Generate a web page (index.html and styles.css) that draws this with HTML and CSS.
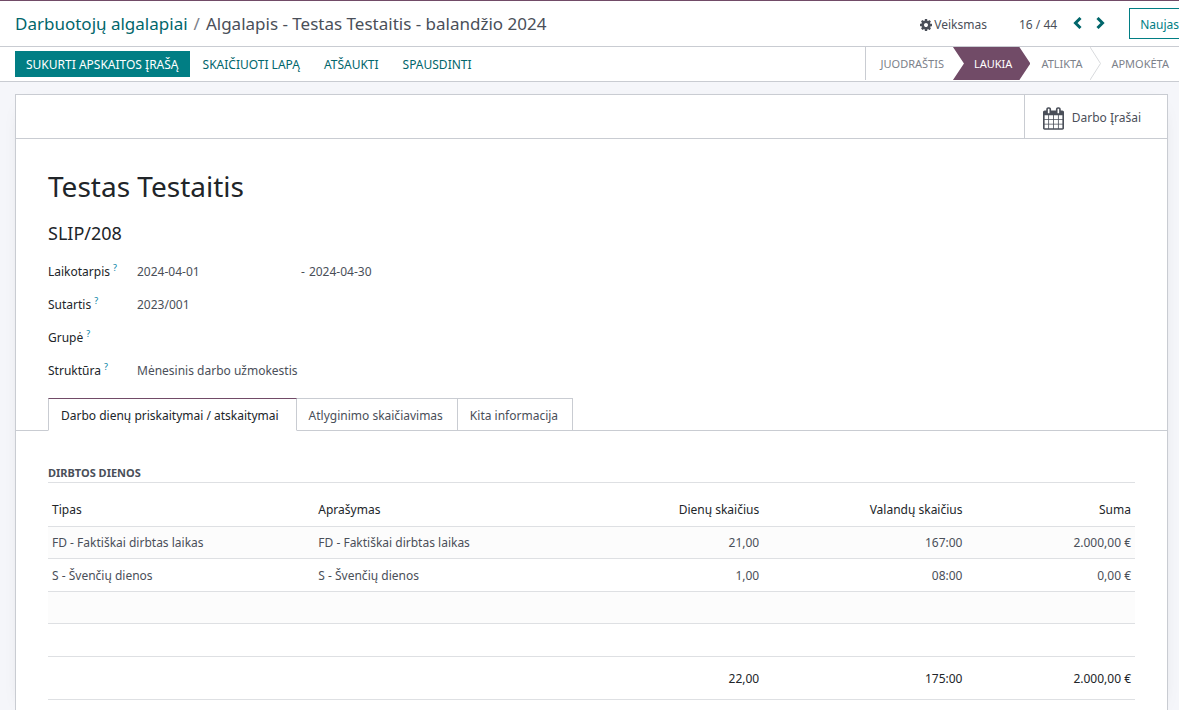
FILE: index.html
```html
<!DOCTYPE html>
<html lang="lt">
<head>
<meta charset="utf-8">
<meta name="viewport" content="width=device-width, initial-scale=1">
<title>Algalapis - Testas Testaitis - balandžio 2024</title>
<link rel="stylesheet" href="styles.css">
</head>
<body>
<header class="control-panel">
  <nav class="breadcrumb" aria-label="Kelias">
    <a href="#">Darbuotojų algalapiai</a>
    <span class="separator">/</span>
    <span>Algalapis - Testas Testaitis - balandžio 2024</span>
  </nav>
  <button type="button" class="action-menu">
    <svg class="icon-cog" viewBox="128 128 1536 1536" aria-hidden="true"><path d="M1152 896q0-106-75-181t-181-75-181 75-75 181 75 181 181 75 181-75 75-181zm512-109v222q0 12-8 23t-20 13l-185 28q-19 54-39 91 35 50 107 138 10 12 10 25t-9 23q-27 37-99 108t-94 71q-12 0-26-9l-138-108q-44 23-91 38-16 136-29 186-7 28-36 28h-222q-14 0-24.500-8.500t-11.500-21.500l-28-184q-49-16-90-37l-141 107q-10 9-25 9-14 0-25-11-126-114-165-168-7-10-7-23 0-12 8-23 15-21 51-66.500t54-70.500q-27-50-41-99l-183-27q-13-2-21-12.500t-8-23.500v-222q0-12 8-23t19-13l186-28q14-46 39-92-40-57-107-138-10-12-10-24 0-10 9-23 26-36 98.500-107.500t94.500-71.500q13 0 26 10l138 107q44-23 91-38 16-136 29-186 7-28 36-28h222q14 0 24.500 8.500t11.500 21.500l28 184q49 16 90 37l142-107q9-9 24-9 13 0 25 10 129 119 165 170 7 8 7 22 0 12-8 23-15 21-51 66.500t-54 70.500q26 50 41 98l183 28q13 2 21 12.500t8 23.500z"/></svg>
    <span>Veiksmas</span>
  </button>
  <div class="pager">
    <span class="pager-count">16 / 44</span>
    <button type="button" class="pager-button" aria-label="Ankstesnis"><svg viewBox="0 0 10 12" aria-hidden="true"><path d="M7.500 1 2.500 6l5 5"/></svg></button>
    <button type="button" class="pager-button" aria-label="Kitas"><svg viewBox="0 0 10 12" aria-hidden="true"><path d="m2.500 1 5 5-5 5"/></svg></button>
  </div>
  <button type="button" class="new-button">Naujas</button>
</header>

<div class="status-row">
  <div class="status-actions">
    <button type="button" class="action primary">SUKURTI APSKAITOS ĮRAŠĄ</button>
    <button type="button" class="action">SKAIČIUOTI LAPĄ</button>
    <button type="button" class="action">ATŠAUKTI</button>
    <button type="button" class="action">SPAUSDINTI</button>
  </div>
  <div class="stages">
    <button type="button" class="stage">JUODRAŠTIS</button>
    <button type="button" class="stage current" aria-current="step">LAUKIA</button>
    <button type="button" class="stage">ATLIKTA</button>
    <svg class="chevron" viewBox="0 0 11 33" aria-hidden="true"><path d="M0 0 10.500 16.500 0 33"/></svg>
    <button type="button" class="stage last">APMOKĖTA</button>
  </div>
</div>

<main class="sheet">
  <div class="button-box">
    <button type="button" class="stat-button">
      <svg class="icon-calendar" viewBox="64 0 1664 1792" aria-hidden="true"><path d="M192 1664h288v-288h-288v288zm352 0h320v-288h-320v288zm-352-352h288v-320h-288v320zm352 0h320v-320h-320v320zm-352-384h288v-288h-288v288zm736 736h320v-288h-320v288zm-384-736h320v-288h-320v288zm768 736h288v-288h-288v288zm-384-352h320v-320h-320v320zm-352-864v-288q0-13-9.500-22.500t-22.500-9.500h-64q-13 0-22.500 9.500t-9.500 22.500v288q0 13 9.500 22.500t22.500 9.500h64q13 0 22.500-9.500t9.500-22.500zm736 864h288v-320h-288v320zm-384-384h320v-288h-320v288zm384 0h288v-288h-288v288zm32-480v-288q0-13-9.500-22.500t-22.500-9.500h-64q-13 0-22.500 9.500t-9.500 22.500v288q0 13 9.500 22.500t22.500 9.500h64q13 0 22.500-9.500t9.500-22.500zm384-64v1280q0 52-38 90t-90 38h-1408q-52 0-90-38t-38-90v-1280q0-52 38-90t90-38h128v-96q0-66 47-113t113-47h64q66 0 113 47t47 113v96h384v-96q0-66 47-113t113-47h64q66 0 113 47t47 113v96h128q52 0 90 38t38 90z"/></svg>
      <span>Darbo Įrašai</span>
    </button>
  </div>

  <section class="record">
    <h1>Testas Testaitis</h1>
    <h2>SLIP/208</h2>
    <div class="fields">
      <label for="date-from">Laikotarpis<sup>?</sup></label>
      <div class="period">
        <input id="date-from" type="text" value="2024-04-01">
        <span>-</span>
        <input type="text" value="2024-04-30" aria-label="Laikotarpio pabaiga">
      </div>
      <label for="contract">Sutartis<sup>?</sup></label>
      <input id="contract" type="text" value="2023/001">
      <label for="batch">Grupė<sup>?</sup></label>
      <input id="batch" type="text">
      <label for="structure">Struktūra<sup>?</sup></label>
      <input id="structure" type="text" value="Mėnesinis darbo užmokestis">
    </div>
  </section>

  <div class="tabs" role="tablist">
    <button type="button" role="tab" class="tab active" aria-selected="true">Darbo dienų priskaitymai / atskaitymai</button>
    <button type="button" role="tab" class="tab" aria-selected="false">Atlyginimo skaičiavimas</button>
    <button type="button" role="tab" class="tab" aria-selected="false">Kita informacija</button>
  </div>

  <section class="tab-page">
    <h3>DIRBTOS DIENOS</h3>
    <table class="days">
      <colgroup><col class="col-type"><col class="col-name"><col class="col-days"><col class="col-hours"><col class="col-sum"></colgroup>
      <thead>
        <tr><th>Tipas</th><th>Aprašymas</th><th class="num">Dienų skaičius</th><th class="num">Valandų skaičius</th><th class="num">Suma</th></tr>
      </thead>
      <tbody>
        <tr><td>FD - Faktiškai dirbtas laikas</td><td>FD - Faktiškai dirbtas laikas</td><td class="num">21,00</td><td class="num">167:00</td><td class="num">2.000,00 €</td></tr>
        <tr><td>S - Švenčių dienos</td><td>S - Švenčių dienos</td><td class="num">1,00</td><td class="num">08:00</td><td class="num">0,00 €</td></tr>
        <tr><td colspan="5"></td></tr>
        <tr><td colspan="5"></td></tr>
      </tbody>
      <tfoot>
        <tr><td></td><td></td><td class="num">22,00</td><td class="num">175:00</td><td class="num">2.000,00 €</td></tr>
      </tfoot>
    </table>
  </section>
</main>
</body>
</html>
```
FILE: styles.css
```css
:root {
  --line: #c9ccd2;
  --row-line: #dee0e3;
  --teal: #017e84;
  --teal-dark: #01666b;
  --plum: #714b67;
  --text: #4a4f59;
  --dark: #212529;
}

* {
  box-sizing: border-box;
}

body {
  margin: 0;
  min-height: 100vh;
  display: flex;
  flex-direction: column;
  overflow: hidden;
  background: #f5f6fa;
  border-top: 1px solid var(--plum);
  color: var(--text);
  font-family: "Noto Sans", "Open Sans", sans-serif;
  font-size: 12px;
  line-height: 18px;
}

button,
input {
  margin: 0;
  padding: 0;
  border: 0;
  background: none;
  color: inherit;
  font: inherit;
}

button {
  cursor: pointer;
  white-space: nowrap;
}

svg {
  display: block;
  fill: currentColor;
}

.control-panel {
  display: flex;
  align-items: center;
  height: 46px;
  padding-left: 15px;
  background: #fff;
  border-bottom: 1px solid var(--line);
}

.breadcrumb {
  display: flex;
  flex: 1;
  gap: 6px;
  padding-top: 1px;
  font-size: 17px;
  line-height: 24px;
  white-space: nowrap;
}

.breadcrumb a {
  color: var(--teal-dark);
  text-decoration: none;
}

.separator {
  color: #7c818a;
}

.action-menu {
  display: flex;
  align-items: center;
  gap: 2px;
  padding-top: 2px;
}

.icon-cog {
  width: 12px;
  height: 12px;
}

.pager {
  display: flex;
  align-items: center;
  margin: 0 18px 0 32px;
}

.pager-count {
  margin-right: 10px;
  padding-top: 2px;
}

.pager-button {
  width: 22px;
  padding: 0 6px 2px;
  color: var(--teal-dark);
}

.pager-button svg {
  width: 10px;
  height: 12px;
  fill: none;
  stroke: currentColor;
  stroke-width: 3;
}

.new-button {
  height: 31px;
  margin-right: -10px;
  padding: 2px 9px 0 10px;
  border: 1px solid var(--teal);
  color: var(--teal);
}

.status-row {
  display: flex;
  justify-content: space-between;
  height: 35px;
  background: #fff;
  border-bottom: 1px solid var(--line);
}

.status-actions {
  display: flex;
  align-items: center;
  gap: 2px;
  padding-left: 15px;
}

.action {
  height: 26px;
  padding: 2px 11px 0;
  color: var(--teal-dark);
}

.action.primary {
  background: var(--teal);
  color: #fff;
}

.stages {
  display: flex;
  height: 33px;
  padding-left: 15px;
  border-left: 1px solid var(--line);
  color: #7c818a;
  font-size: 11px;
}

.stage.current {
  margin: 0 11px 0 9px;
  padding: 0 18px 0 21px;
  background: var(--plum);
  color: #fff;
  clip-path: polygon(0 0, calc(100% - 11px) 0, 100% 50%, calc(100% - 11px) 100%, 0 100%, 11px 50%);
}

.stage.last {
  padding-right: 10px;
}

.chevron {
  width: 11px;
  height: 33px;
  margin: 0 10px 0 8px;
  fill: none;
  stroke: #d8dadd;
}

.sheet {
  flex: 1;
  margin: 12px 11px 0 15px;
  background: #fff;
  border: 1px solid var(--line);
  border-bottom: 0;
  box-shadow: 0 5px 20px -15px rgba(0, 0, 0, 0.4);
}

.button-box {
  display: flex;
  justify-content: flex-end;
  height: 44px;
  border-bottom: 1px solid var(--line);
}

.stat-button {
  display: flex;
  align-items: center;
  gap: 8px;
  padding: 3px 26px 0 18px;
  border-left: 1px solid var(--line);
}

.icon-calendar {
  width: 21px;
  height: 23px;
}

.record {
  padding: 27px 32px 11px;
}

h1,
h2,
h3 {
  margin: 0;
  font-weight: 400;
}

h1 {
  color: var(--dark);
  font-size: 28px;
  line-height: 40px;
}

h2 {
  margin: 15px 0 10px;
  color: var(--dark);
  font-size: 18px;
  line-height: 24px;
}

.fields {
  display: grid;
  grid-template-columns: 89px 1fr;
  grid-auto-rows: 33px;
  align-items: center;
}

.fields label {
  color: var(--dark);
}

.fields sup {
  margin-left: 3px;
  color: #0180a5;
  font-size: 9px;
  line-height: 9px;
}

.fields input {
  width: 100%;
}

.period {
  display: flex;
  gap: 4px;
}

.period input {
  width: 160px;
}

.tabs {
  display: flex;
  padding-left: 32px;
  box-shadow: inset 0 -1px var(--line);
}

.tab {
  height: 33px;
  padding: 2px 14px 0 12px;
  border: 1px solid var(--line);
  border-left: 0;
}

.tab.active {
  padding-right: 17px;
  background: #fff;
  border-left: 1px solid var(--line);
  border-top-color: var(--plum);
  border-bottom-color: #fff;
  color: var(--dark);
}

.tab-page {
  padding: 33px 32px 0;
}

h3 {
  border-bottom: 1px solid var(--row-line);
  font-size: 11px;
  font-weight: 700;
}

.days {
  width: 100%;
  margin-top: 10px;
  border-collapse: collapse;
  table-layout: fixed;
}

.col-type {
  width: 24.5%;
}

.col-name {
  width: 22.3%;
}

.col-days {
  width: 19%;
}

.col-hours {
  width: 18.7%;
}

.col-sum {
  width: 15.5%;
}

.days th,
.days td {
  height: 33px;
  padding: 2px 4px 0;
  border-bottom: 1px solid var(--row-line);
  font-weight: 400;
  text-align: left;
}

.days th,
.days tfoot {
  color: var(--dark);
}

.days tbody tr:nth-child(odd) {
  background: #fcfcfc;
}

.days tbody tr:nth-child(odd) td {
  height: 32px;
}

.days tfoot td {
  height: 43px;
}

.days .num {
  text-align: right;
}
```
